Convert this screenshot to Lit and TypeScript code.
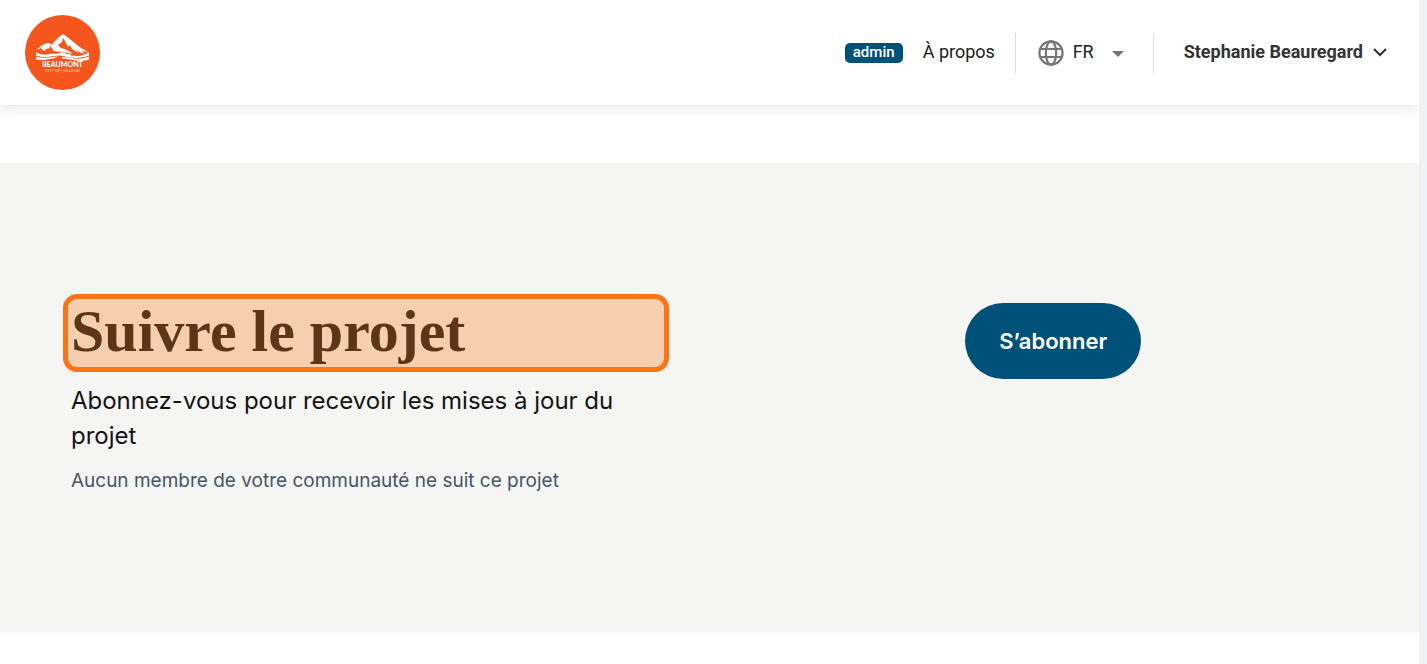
import { LitElement, html, css } from "lit";
import { customElement } from "lit/decorators.js";

@customElement("site-header")
export class SiteHeader extends LitElement {
  static styles = css`
    :host {
      display: block;
      position: relative;
      background: #fff;
      box-shadow: 0 2px 12px rgba(0, 0, 0, 0.12);
      clip-path: inset(0 0 -20px 0);
      font-family: Roboto, "Liberation Sans", sans-serif;
      color: #202020;
    }
    .bar {
      display: flex;
      align-items: center;
      justify-content: space-between;
      height: 105px;
      padding: 0 30px 0 25px;
    }
    .logo,
    .logo svg {
      display: block;
    }
    nav {
      display: flex;
      align-items: center;
    }
    a {
      color: inherit;
      text-decoration: none;
    }
    .badge {
      width: 58px;
      height: 20px;
      margin-right: 20px;
      border-radius: 5px;
      background: #00517a;
      color: #fff;
      font-size: 15px;
      font-weight: 500;
      line-height: 19px;
      text-align: center;
    }
    .about {
      width: 72px;
      margin-right: 20px;
      padding-bottom: 2px;
      font-size: 18px;
      white-space: nowrap;
    }
    .language {
      display: flex;
      align-items: center;
      gap: 9px;
      height: 40px;
      padding: 0 22px;
      border-left: 1px solid #dcdcdc;
      border-right: 1px solid #dcdcdc;
    }
    .picker {
      display: grid;
      align-items: center;
      width: 58px;
    }
    .picker > * {
      grid-area: 1 / 1;
    }
    .picker svg {
      justify-self: end;
      pointer-events: none;
    }
    select {
      appearance: none;
      width: 100%;
      padding: 0 0 2px;
      border: 0;
      background: none;
      color: inherit;
      font: inherit;
      font-size: 18px;
    }
    .account {
      display: flex;
      align-items: center;
      gap: 8px;
      padding: 0 0 2px;
      margin-left: 30px;
      border: 0;
      background: none;
      color: #333;
      font: inherit;
      font-size: 18px;
      font-weight: 700;
      white-space: nowrap;
    }
  `;

  render() {
    return html`
      <header class="bar">
        <a class="logo" href="#" aria-label="Beaumont">
          <svg width="75" height="75" viewBox="0 0 75 75">
            <circle cx="37.500" cy="37.500" r="37.500" fill="#f4561d" />
            <g fill="#fff">
              <path
                d="M27 29 31 25 34 22 38 19 41 21 46 25 51 29 56 33 63 37 57 36 60 39 54 37 51 34 53 38 47 34 45 30 43 32 40 26 38 23 37 27 33 30 36 33 42 35 47 38 38 37.500 33 36 30 33Z"
              />
              <path
                d="M11 35 16 31 20 28.500 24 28 28 30.500 32 34 34 37 29 36 26 32 24 30 25 33 21 34 20 36 16 34 17 32.500Z"
              />
              <path
                d="M11 37C18 42 24 38 31 39L37 37 42 39 48 38 44 40C53 42 59 41 64 37V40.500C54 44.500 46 42.500 40 41.500L35 40.500C27 40.500 21 44 11 40.500Z"
              />
              <path
                d="M11 41.500C20 44.500 26 41.500 33 41.500L29 43.500C23 43.500 21 46 11 44.500ZM37 42C47 42 52 46 64 41.500V44.500C54 48 47 44 37 43.500Z"
              />
            </g>
            <text
              x="37.500"
              y="51.500"
              fill="#fff"
              text-anchor="middle"
              font-family="Lato, sans-serif"
              font-size="7"
              font-weight="900"
            >
              BEAUMONT
            </text>
            <text
              x="37.500"
              y="56.500"
              fill="#ffc4a8"
              text-anchor="middle"
              font-family="Lato, sans-serif"
              font-size="4"
              font-weight="700"
            >
              CITY OF | VILLE DE
            </text>
          </svg>
        </a>
        <nav>
          <a class="badge" href="#">admin</a>
          <a class="about" href="#">À propos</a>
          <div class="language">
            <svg
              width="26"
              height="26"
              viewBox="0 0 26 26"
              fill="none"
              stroke="#777"
              stroke-width="2.200"
              aria-hidden="true"
            >
              <circle cx="13" cy="13" r="11.600" />
              <ellipse cx="13" cy="13" rx="5.200" ry="11.600" />
              <path d="M2.500 9H23.500M2.500 17H23.500" />
            </svg>
            <div class="picker">
              <select aria-label="Langue">
                <option>FR</option>
                <option>EN</option>
              </select>
              <svg width="24" height="24" viewBox="0 0 24 24" aria-hidden="true">
                <path d="M5 10H17L11 16Z" fill="#757575" />
              </svg>
            </div>
          </div>
          <button class="account">
            Stephanie Beauregard
            <svg width="18" height="18" viewBox="0 0 18 18" aria-hidden="true">
              <path d="M3 6 9 12 15 6" fill="none" stroke="#333" stroke-width="2.200" />
            </svg>
          </button>
        </nav>
      </header>
    `;
  }
}

@customElement("follow-project")
export class FollowProject extends LitElement {
  static styles = css`
    :host {
      display: block;
      margin-top: 58px;
      padding: 138px 5%;
      background: #f5f5f3;
      font-family: Inter, "Open Sans", sans-serif;
      color: #141414;
    }
    .columns {
      display: grid;
      grid-template-columns: 1fr 1fr;
      gap: 98px;
      align-items: start;
    }
    h2 {
      position: relative;
      margin: 0;
      padding-bottom: 4px;
      color: #1b1b1b;
      font-family: "Liberation Serif", serif;
      font-size: 60px;
      font-weight: 700;
      line-height: 60px;
    }
    .highlight {
      position: absolute;
      inset: -7px -8px;
      border: 5px solid #fb7417;
      border-radius: 14px;
      background: rgba(249, 115, 22, 0.3);
      background-clip: padding-box;
    }
    .lead {
      margin: 18px 0 0;
      font-size: 24px;
      line-height: 35px;
    }
    .status {
      margin: 14px 0 0;
      color: #475569;
      font-size: 19px;
      line-height: 28px;
    }
    .subscribe {
      justify-self: center;
      height: 76px;
      margin-top: 2px;
      padding: 0 34px;
      border: 0;
      border-radius: 38px;
      background: #00517a;
      color: #fff;
      font: inherit;
      font-size: 22px;
      font-weight: 600;
    }
  `;

  render() {
    return html`
      <section class="columns">
        <div>
          <h2>Suivre le projet<span class="highlight"></span></h2>
          <p class="lead">Abonnez-vous pour recevoir les mises à jour du projet</p>
          <p class="status">Aucun membre de votre communauté ne suit ce projet</p>
        </div>
        <button class="subscribe">S’abonner</button>
      </section>
    `;
  }
}

@customElement("app-root")
export class AppRoot extends LitElement {
  static styles = css`
    :host {
      display: block;
      box-sizing: border-box;
      min-height: 100vh;
      border-right: 8px solid #ebf1f4;
      background: #fff;
    }
  `;

  render() {
    return html`
      <site-header></site-header>
      <follow-project></follow-project>
    `;
  }
}
